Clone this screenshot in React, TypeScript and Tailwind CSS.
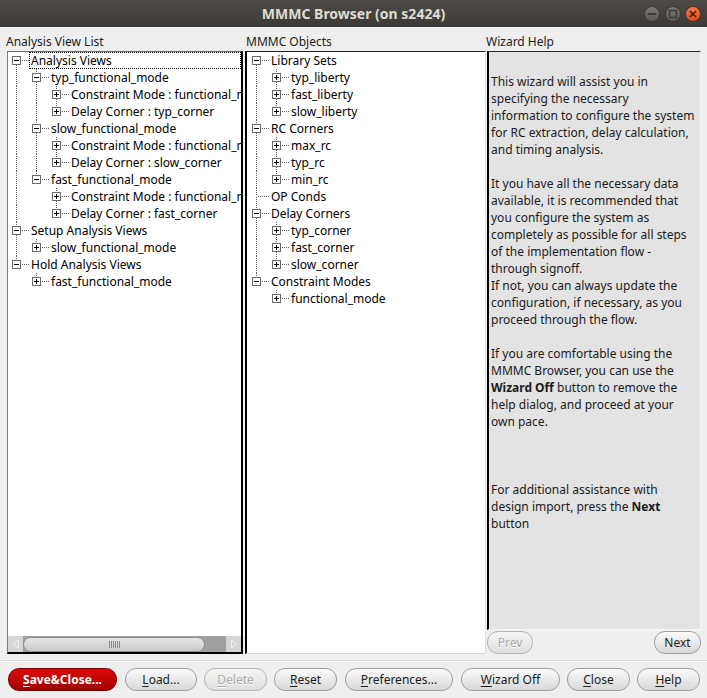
import React from "react";

type Kind = "plus" | "minus" | "leaf";
type Node = { label: string; kind: Kind; focus?: boolean; children?: Node[] };
type Row = Node & { level: number; guides: boolean[]; last: boolean; first: boolean };

const corner = (name: string): Node[] => [
  { label: "Constraint Mode : functional_mode", kind: "plus" },
  { label: `Delay Corner : ${name}`, kind: "plus" },
];

const viewTree: Node[] = [
  {
    label: "Analysis Views",
    kind: "minus",
    focus: true,
    children: [
      { label: "typ_functional_mode", kind: "minus", children: corner("typ_corner") },
      { label: "slow_functional_mode", kind: "minus", children: corner("slow_corner") },
      { label: "fast_functional_mode", kind: "minus", children: corner("fast_corner") },
    ],
  },
  { label: "Setup Analysis Views", kind: "minus", children: [{ label: "slow_functional_mode", kind: "plus" }] },
  { label: "Hold Analysis Views", kind: "minus", children: [{ label: "fast_functional_mode", kind: "plus" }] },
];

const leaves = (names: string[]): Node[] => names.map((n) => ({ label: n, kind: "plus" as Kind }));

const objectTree: Node[] = [
  { label: "Library Sets", kind: "minus", children: leaves(["typ_liberty", "fast_liberty", "slow_liberty"]) },
  { label: "RC Corners", kind: "minus", children: leaves(["max_rc", "typ_rc", "min_rc"]) },
  { label: "OP Conds", kind: "leaf" },
  { label: "Delay Corners", kind: "minus", children: leaves(["typ_corner", "fast_corner", "slow_corner"]) },
  { label: "Constraint Modes", kind: "minus", children: leaves(["functional_mode"]) },
];

function flatten(nodes: Node[], level = 0, guides: boolean[] = [], out: Row[] = []): Row[] {
  nodes.forEach((n, i) => {
    const last = i === nodes.length - 1;
    out.push({ ...n, level, guides, last, first: level === 0 && i === 0 });
    if (n.children) flatten(n.children, level + 1, [...guides, !last], out);
  });
  return out;
}

const DOT = "#5c5c5c";

function Guide({ on }: { on: boolean }) {
  return (
    <svg width="20" height="17" className="shrink-0" shapeRendering="crispEdges">
      {on && <line x1="8.5" y1="0" x2="8.5" y2="17" stroke={DOT} strokeDasharray="1 1" />}
    </svg>
  );
}

function Branch({ row }: { row: Row }) {
  return (
    <svg width="21" height="17" className="shrink-0" shapeRendering="crispEdges">
      {!row.first && <line x1="8.5" y1="0" x2="8.5" y2="8" stroke={DOT} strokeDasharray="1 1" />}
      {!row.last && <line x1="8.5" y1="9" x2="8.5" y2="17" stroke={DOT} strokeDasharray="1 1" />}
      <line x1={row.kind === "leaf" ? 10 : 14} y1="8.5" x2="21" y2="8.5" stroke={DOT} strokeDasharray="1 1" />
      {row.kind !== "leaf" && (
        <g>
          <rect x="4.5" y="4.5" width="8" height="8" fill="#fff" stroke="#6a6a6a" />
          <line x1="6" y1="8.5" x2="11" y2="8.5" stroke="#000" />
          {row.kind === "plus" && <line x1="8.5" y1="6" x2="8.5" y2="11" stroke="#000" />}
        </g>
      )}
    </svg>
  );
}

function Tree({ nodes }: { nodes: Node[] }) {
  return (
    <div className="flex flex-col">
      {flatten(nodes).map((row, i) => (
        <div key={i} className="flex h-[17px] items-center whitespace-nowrap">
          {row.guides.map((g, j) => (
            <Guide key={j} on={g} />
          ))}
          <Branch row={row} />
          {row.focus ? (
            <span className="flex-1 h-[17px] border border-dotted border-black pl-[1px] leading-[15px]">{row.label}</span>
          ) : (
            <span className="pl-[2px] leading-[17px]">{row.label}</span>
          )}
        </div>
      ))}
    </div>
  );
}

function Btn({
  w,
  children,
  disabled,
  red,
}: {
  w: string;
  children: React.ReactNode;
  disabled?: boolean;
  red?: boolean;
}) {
  const look = red
    ? "bg-linear-to-b from-[#dc0a0a] to-[#a50000] border-[#760000] text-white font-bold"
    : disabled
      ? "bg-linear-to-b from-[#f6f6f6] to-[#dedede] border-[#b4b4b4] text-[#a9a9a9] [text-shadow:0_1px_0_#fff]"
      : "bg-linear-to-b from-[#fbfbfb] to-[#d8d8d8] border-[#a0a0a0] text-[#1c1c1c]";
  return (
    <div className={`${w} h-[23px] shrink-0 rounded-[11px] border flex items-center justify-center leading-[16px] ${look}`}>
      {children}
    </div>
  );
}

const U = ({ c }: { c: string }) => <span className="underline underline-offset-[2px]">{c}</span>;

const help: React.ReactNode[] = [
  "",
  "This wizard will assist you in",
  "specifying the necessary",
  "information to configure the system",
  "for RC extraction, delay calculation,",
  "and timing analysis.",
  "",
  "It you have all the necessary data",
  "available, it is recommended that",
  "you configure the system as",
  "completely as possible for all steps",
  "of the implementation flow -",
  "through signoff.",
  "If not, you can always update the",
  "configuration, if necessary, as you",
  "proceed through the flow.",
  "",
  "If you are comfortable using the",
  "MMMC Browser, you can use the",
  <>
    <b>Wizard Off</b> button to remove the
  </>,
  "help dialog, and proceed at your",
  "own pace.",
  "",
  "",
  "",
  "For additional assistance with",
  <>
    design import, press the <b>Next</b>
  </>,
  "button",
];

export default function App() {
  return (
    <div className="w-[707px] h-[698px] overflow-hidden bg-[#efefef] flex flex-col font-['Noto_Sans',sans-serif] text-[12px] text-black">
      {/* Title bar */}
      <div className="h-[27px] shrink-0 bg-linear-to-b from-[#4d4c47] to-[#3a3935] flex items-center relative">
        <div className="flex-1 text-center text-[14px] font-bold text-[#dfdbd2] leading-[20px]">MMMC Browser (on s2424)</div>
        <svg width="70" height="27" className="absolute right-0 top-0">
          <defs>
            <linearGradient id="gb" x1="0" y1="0" x2="0" y2="1">
              <stop offset="0" stopColor="#7b7a75" />
              <stop offset="1" stopColor="#595853" />
            </linearGradient>
            <linearGradient id="ob" x1="0" y1="0" x2="0" y2="1">
              <stop offset="0" stopColor="#f7784a" />
              <stop offset="1" stopColor="#df4a16" />
            </linearGradient>
          </defs>
          <circle cx="15" cy="14" r="7.5" fill="url(#gb)" stroke="#3a3935" />
          <line x1="11" y1="14" x2="19" y2="14" stroke="#3c3b37" strokeWidth="2" />
          <circle cx="36" cy="14" r="7.5" fill="url(#gb)" stroke="#3a3935" />
          <rect x="32.5" y="10.5" width="7" height="7" fill="none" stroke="#3c3b37" strokeWidth="1.5" />
          <circle cx="56" cy="14" r="7.5" fill="url(#ob)" stroke="#3a3935" />
          <path d="M53 11 L59 17 M59 11 L53 17" stroke="#4a1a08" strokeWidth="1.6" />
        </svg>
      </div>

      {/* Column labels */}
      <div className="h-[24px] shrink-0 flex pt-[7px] leading-[16px] text-[#1c1c1c]">
        <span className="w-[246px] pl-[6px]">Analysis View List</span>
        <span className="w-[240px]">MMMC Objects</span>
        <span>Wizard Help</span>
      </div>

      {/* Panels */}
      <div className="h-[603px] shrink-0 flex">
        <div className="ml-[7px] w-[236px] h-full flex flex-col bg-white border-l border-t border-l-[#7d7d7d] border-t-[#6a6a6a] border-r-2 border-b-2 border-r-black border-b-black overflow-hidden">
          <div className="flex-1 overflow-hidden">
            <Tree nodes={viewTree} />
          </div>
          <div className="h-[16px] shrink-0 flex bg-[#a0a0a0]">
            <div className="w-[15px] h-full bg-[#d5d5d5] flex items-center justify-center">
              <svg width="8" height="10">
                <path d="M6.5 1 L1.5 5 L6.5 9 Z" fill="none" stroke="#f4f4f4" />
              </svg>
            </div>
            <div className="flex-1 flex items-center">
              <div className="w-[182px] h-[15px] rounded-full border border-[#8e8e8e] bg-linear-to-b from-[#e4e4e4] to-[#cbcbcb] flex items-center justify-center">
                <svg width="11" height="7" shapeRendering="crispEdges">
                  {[0, 2, 4, 6, 8, 10].map((x) => (
                    <line key={x} x1={x + 0.5} y1="0" x2={x + 0.5} y2="7" stroke="#8a8a8a" />
                  ))}
                </svg>
              </div>
            </div>
            <div className="w-[15px] h-full bg-[#d5d5d5] flex items-center justify-center">
              <svg width="8" height="10">
                <path d="M1.5 1 L6.5 5 L1.5 9 Z" fill="none" stroke="#f4f4f4" />
              </svg>
            </div>
          </div>
        </div>

        <div className="ml-[2px] w-[241px] h-[603px] bg-white border-l-2 border-t border-l-black border-t-[#202020] border-r border-b border-r-[#e2e2e2] border-b-[#dadada] overflow-hidden pl-[1px]">
          <Tree nodes={objectTree} />
        </div>

        <div className="ml-[1px] w-[214px] flex flex-col">
          <div className="h-[580px] bg-[#e3e3e3] border-l-2 border-t border-l-black border-t-[#2a2a2a] border-r border-b border-r-[#f6f6f6] border-b-[#f6f6f6] pl-[2px] pt-[4px] overflow-hidden text-[#1a1a1a]">
            {help.map((line, i) => (
              <div key={i} className="h-[17px] leading-[17px] whitespace-nowrap">
                {line}
              </div>
            ))}
          </div>
          <div className="flex justify-between mt-[1px]">
            <Btn w="w-[46px]" disabled>
              Prev
            </Btn>
            <Btn w="w-[47px]">Next</Btn>
          </div>
        </div>
      </div>

      {/* Separator */}
      <div className="mt-[6px] h-[2px] shrink-0 border-t border-t-[#dcdcdc] border-b border-b-[#fbfbfb]" />

      {/* Bottom buttons */}
      <div className="mt-[6px] flex pl-[8px]">
        <Btn w="w-[109px]" red>
          <U c="S" />
          ave&amp;Close...
        </Btn>
        <div className="ml-[8px]">
          <Btn w="w-[72px]">
            <U c="L" />
            oad...
          </Btn>
        </div>
        <div className="ml-[7px]">
          <Btn w="w-[63px]" disabled>
            <U c="D" />
            elete
          </Btn>
        </div>
        <div className="ml-[7px]">
          <Btn w="w-[63px]">
            <U c="R" />
            eset
          </Btn>
        </div>
        <div className="ml-[8px]">
          <Btn w="w-[108px]">
            <U c="P" />
            references...
          </Btn>
        </div>
        <div className="ml-[8px]">
          <Btn w="w-[99px]">
            <U c="W" />
            izard Off
          </Btn>
        </div>
        <div className="ml-[7px]">
          <Btn w="w-[63px]">
            <U c="C" />
            lose
          </Btn>
        </div>
        <div className="ml-[7px]">
          <Btn w="w-[63px]">
            <U c="H" />
            elp
          </Btn>
        </div>
      </div>
    </div>
  );
}
